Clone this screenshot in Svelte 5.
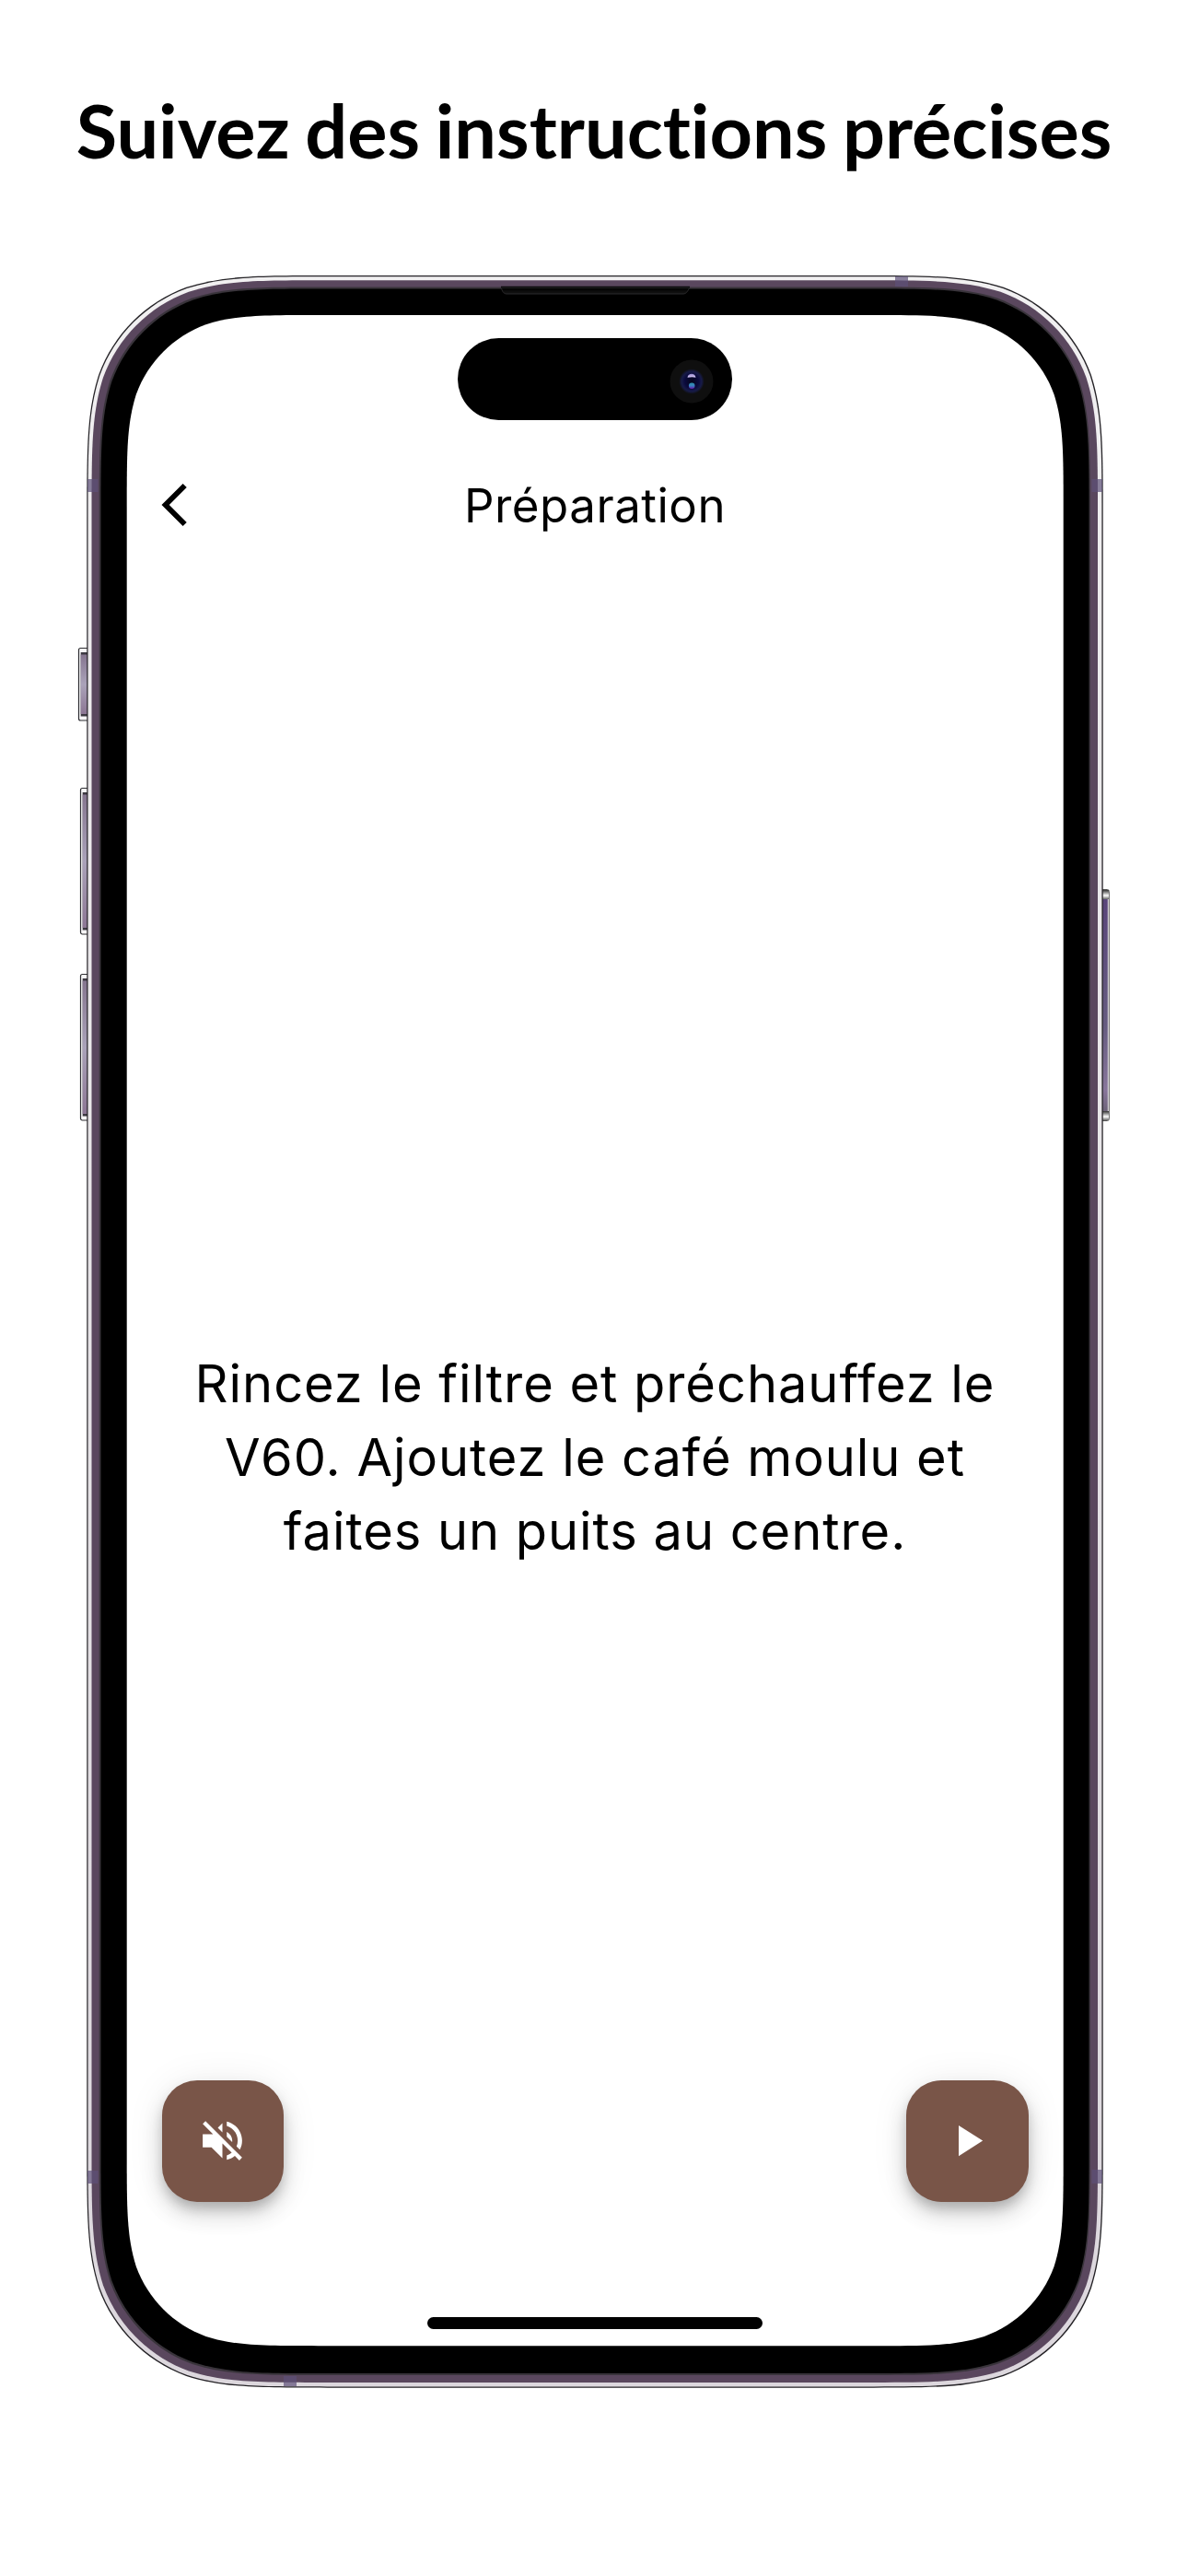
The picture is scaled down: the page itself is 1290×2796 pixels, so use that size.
<script>
  const lines = [
    'Rincez le filtre et préchauffez le',
    'V60. Ajoutez le café moulu et',
    'faites un puits au centre.'
  ];

  // Rounded rectangle with continuous-curvature corners
  function squircle(x0, y0, x1, y1, r) {
    const a = 1.528665 * r, b = 1.088493 * r, c = 0.868407 * r;
    const d = 0.631494 * r, e = 0.074911 * r, f = 0.372824 * r, g = 0.16906 * r;
    return [
      `M${x0 + a} ${y0}`,
      `L${x1 - a} ${y0}`,
      `C${x1 - b} ${y0} ${x1 - c} ${y0} ${x1 - d} ${y0 + e}`,
      `C${x1 - f} ${y0 + g} ${x1 - g} ${y0 + f} ${x1 - e} ${y0 + d}`,
      `C${x1} ${y0 + c} ${x1} ${y0 + b} ${x1} ${y0 + a}`,
      `L${x1} ${y1 - a}`,
      `C${x1} ${y1 - b} ${x1} ${y1 - c} ${x1 - e} ${y1 - d}`,
      `C${x1 - g} ${y1 - f} ${x1 - f} ${y1 - g} ${x1 - d} ${y1 - e}`,
      `C${x1 - c} ${y1} ${x1 - b} ${y1} ${x1 - a} ${y1}`,
      `L${x0 + a} ${y1}`,
      `C${x0 + b} ${y1} ${x0 + c} ${y1} ${x0 + d} ${y1 - e}`,
      `C${x0 + f} ${y1 - g} ${x0 + g} ${y1 - f} ${x0 + e} ${y1 - d}`,
      `C${x0} ${y1 - c} ${x0} ${y1 - b} ${x0} ${y1 - a}`,
      `L${x0} ${y0 + a}`,
      `C${x0} ${y0 + b} ${x0} ${y0 + c} ${x0 + e} ${y0 + d}`,
      `C${x0 + g} ${y0 + f} ${x0 + f} ${y0 + g} ${x0 + d} ${y0 + e}`,
      `C${x0 + c} ${y0} ${x0 + b} ${y0} ${x0 + a} ${y0}Z`
    ].join('');
  }

  const layers = [
    { d: squircle(0.3, 0, 1103.7, 2292.7, 171), fill: '#242226' },
    { d: squircle(1.5, 1.3, 1102.4, 2291.4, 170), fill: 'url(#rim)' },
    { d: squircle(5.5, 5.3, 1098, 2287, 167), fill: '#5a475e' },
    { d: squircle(13.7, 12.5, 1089.8, 2279, 160), fill: '#39343b' },
    { d: squircle(15.5, 14.5, 1088.5, 2277, 159), fill: '#000' },
    { d: squircle(43.7, 43, 1060.7, 2247.2, 136), fill: '#fff' }
  ];

  const bands = [
    { x: 1, y: 221, w: 11.5, h: 14 },
    { x: 1091.5, y: 221, w: 11.5, h: 14 },
    { x: 878, y: 1, w: 14, h: 11 },
    { x: 1, y: 2057, w: 11.5, h: 14 },
    { x: 1091.5, y: 2056, w: 11.5, h: 15 },
    { x: 214, y: 2280, w: 14, h: 11 }
  ];

  const leftKeys = [
    { x: -8.5, y: 404.5, h: 78.5 },
    { x: -6.5, y: 556.5, h: 158.5 },
    { x: -6.5, y: 758.5, h: 158.5 }
  ];
</script>

<main class="page">
  <h1>Suivez des instructions précises</h1>

  <div class="phone">
    <svg class="body" width="1104" height="2293" viewBox="0 0 1104 2293" aria-hidden="true">
      <defs>
        <linearGradient id="rim" x1="0" y1="0" x2="0" y2="1">
          <stop offset="0" stop-color="#f1f0f1" />
          <stop offset="1" stop-color="#dcd7dd" />
        </linearGradient>
        <linearGradient id="key" x1="0" y1="0" x2="0" y2="1">
          <stop offset="0" stop-color="#85758f" />
          <stop offset=".5" stop-color="#aaa2b9" />
          <stop offset="1" stop-color="#8c7694" />
        </linearGradient>
        <linearGradient id="power" x1="0" y1="0" x2="0" y2="1">
          <stop offset="0" stop-color="#59457a" />
          <stop offset=".6" stop-color="#665c80" />
          <stop offset=".9" stop-color="#88759b" />
          <stop offset="1" stop-color="#6d6378" />
        </linearGradient>
        <linearGradient id="cap" x1="0" y1="0" x2="0" y2="1">
          <stop offset="0" stop-color="#333" />
          <stop offset=".3" stop-color="#999" />
          <stop offset=".6" stop-color="#fff" />
          <stop offset="1" stop-color="#666" />
        </linearGradient>
        <linearGradient id="ear" x1="0" y1="0" x2="0" y2="1">
          <stop offset="0" stop-color="#000" />
          <stop offset="1" stop-color="#151515" />
        </linearGradient>
      </defs>

      {#each leftKeys as k}
        <rect x={k.x} y={k.y} width="12" height={k.h} rx="2" fill="#f6f5f6" stroke="#2f2f33" stroke-width="1.2" />
        <rect x={k.x + 2.2} y={k.y + 4.5} width="10" height={k.h - 9} fill="#3d3942" />
        <rect x={k.x + 2.2} y={k.y + 7} width="10" height={k.h - 14} fill="url(#key)" />
      {/each}

      <rect x="1098" y="666.5" width="12.3" height="251" rx="2" fill="#f3f1f4" stroke="#555" stroke-width="1" />
      <rect x="1100" y="667" width="10" height="10" fill="url(#cap)" />
      <rect x="1100" y="907" width="10" height="10" fill="url(#cap)" />
      <rect x="1100" y="677" width="8.8" height="230" fill="url(#power)" />

      {#each layers as l}
        <path d={l.d} fill={l.fill} />
      {/each}
      {#each bands as b}
        <rect x={b.x} y={b.y} width={b.w} height={b.h} fill="#5c5078" opacity=".7" />
      {/each}
      <path d="M450.5 13.5C451 17 453 20 456 20H648C651 20 653 17 654.5 13.5Z" fill="url(#ear)" stroke="#29282a" stroke-width="1" />
      <path d="M450 12.5H655" stroke="#0a090b" stroke-width="1.6" />
    </svg>

    <section class="screen">
      <div class="island">
        <svg width="48" height="48" viewBox="0 0 48 48" aria-hidden="true">
          <defs>
            <radialGradient id="lens">
              <stop offset="0" stop-color="#05051c" />
              <stop offset=".55" stop-color="#0a0a3c" />
              <stop offset=".8" stop-color="#171b48" />
              <stop offset="1" stop-color="#101116" />
            </radialGradient>
            <linearGradient id="glint" x1="0" y1="0" x2="0" y2="1">
              <stop offset="0" stop-color="#2c93a8" />
              <stop offset=".5" stop-color="#3a7fc0" />
              <stop offset="1" stop-color="#6a10a8" />
            </linearGradient>
            <linearGradient id="shine" x1="0" y1="0" x2="0" y2="1">
              <stop offset="0" stop-color="#8f83c8" />
              <stop offset="1" stop-color="#ddd0fa" />
            </linearGradient>
          </defs>
          <circle cx="24" cy="24" r="23.5" fill="#0f0f0f" />
          <circle cx="24" cy="24" r="13.5" fill="url(#lens)" />
          <path d="M19.5 19.8C20 14.3 28 14.3 28.5 19.8C26 18.8 22 19.2 19.5 19.8Z" fill="url(#shine)" />
          <circle cx="24.2" cy="28.8" r="3.3" fill="url(#glint)" />
        </svg>
      </div>

      <header>
        <svg class="back" width="57" height="56" viewBox="0 0 24 24" aria-label="Retour">
          <path d="M11.67 3.87L9.9 2.1 0 12l9.9 9.9 1.77-1.77L3.54 12z" />
        </svg>
        <h2>Préparation</h2>
      </header>

      <p class="step">
        {#each lines as line}<span>{line}</span>{/each}
      </p>

      <footer>
        <button aria-label="Activer le son">
          <svg viewBox="0 0 24 24"><path d="M16.5 12c0-1.77-1.02-3.29-2.5-4.03v2.21l2.45 2.45c.03-.2.05-.41.05-.63zm2.5 0c0 .94-.2 1.82-.54 2.64l1.51 1.51C20.63 14.91 21 13.5 21 12c0-4.28-2.99-7.86-7-8.77v2.06c2.89.86 5 3.54 5 6.71zM4.27 3L3 4.27 7.73 9H3v6h4l5 5v-6.73l4.25 4.25c-.67.52-1.42.93-2.25 1.18v2.06c1.38-.31 2.63-.95 3.69-1.81L19.73 21 21 19.73l-9-9L4.27 3zM12 4L9.91 6.09 12 8.18V4z" /></svg>
        </button>
        <button aria-label="Lecture">
          <svg viewBox="0 0 24 24"><path d="M8 5v14l11-7z" /></svg>
        </button>
      </footer>

      <div class="home"></div>
    </section>
  </div>
</main>

<style>
  :global(body) {
    margin: 0;
    background: #fff;
  }
  .page {
    width: 1290px;
    height: 2796px;
    box-sizing: border-box;
    overflow: hidden;
    display: flex;
    flex-direction: column;
    color: #000;
    background: #fff;
  }
  h1 {
    height: 299px;
    margin: 0;
    padding-top: 91px;
    box-sizing: border-box;
    text-align: center;
    white-space: nowrap;
    font: 700 81px/100px Lato, sans-serif;
    font-variant-ligatures: none;
    word-spacing: -3px;
  }
  .phone {
    position: relative;
    width: 1104px;
    height: 2293px;
    margin-left: 94px;
  }
  .body {
    position: absolute;
    inset: 0;
    overflow: visible;
  }
  .screen {
    position: relative;
    box-sizing: border-box;
    height: 2247px;
    margin: 0 44px;
    padding-top: 68px;
    display: flex;
    flex-direction: column;
    font-family: Inter, sans-serif;
    font-variant-ligatures: none;
  }
  .island {
    width: 298px;
    height: 89px;
    margin: 0 auto;
    border-radius: 45px;
    background: #000;
    display: flex;
    align-items: center;
    justify-content: flex-end;
    padding: 4px 20.5px 0 0;
    box-sizing: border-box;
    flex: none;
  }
  header {
    height: 132px;
    margin-top: 26px;
    padding: 0 37px;
    display: grid;
    grid-template-columns: 57px 1fr 57px;
    align-items: center;
    flex: none;
  }
  .back {
    display: block;
  }
  h2 {
    margin: 0;
    padding-top: 1px;
    text-align: center;
    font-weight: 400;
    font-size: 51px;
    line-height: 60px;
    letter-spacing: 0.5px;
  }
  .step {
    flex: 1;
    margin: 0;
    padding-top: 292px;
    display: flex;
    flex-direction: column;
    align-items: center;
    justify-content: center;
    font-size: 56px;
    line-height: 80px;
    letter-spacing: 0.95px;
    white-space: nowrap;
  }
  footer {
    display: flex;
    justify-content: space-between;
    padding: 0 37.5px;
    flex: none;
  }
  button {
    width: 132.5px;
    height: 132.5px;
    padding: 0;
    border: 0;
    border-radius: 38px;
    background: #795548;
    display: grid;
    place-items: center;
    box-shadow:
      0 8px 13px -2px rgba(0, 0, 0, 0.2),
      0 14px 24px rgba(0, 0, 0, 0.14),
      0 2px 42px rgba(0, 0, 0, 0.08);
  }
  button svg {
    width: 57px;
    height: 57px;
    fill: #fff;
  }
  .home {
    width: 364px;
    height: 12.5px;
    border-radius: 6.5px;
    background: #000;
    margin: 125px auto 18.5px;
    flex: none;
  }
</style>
